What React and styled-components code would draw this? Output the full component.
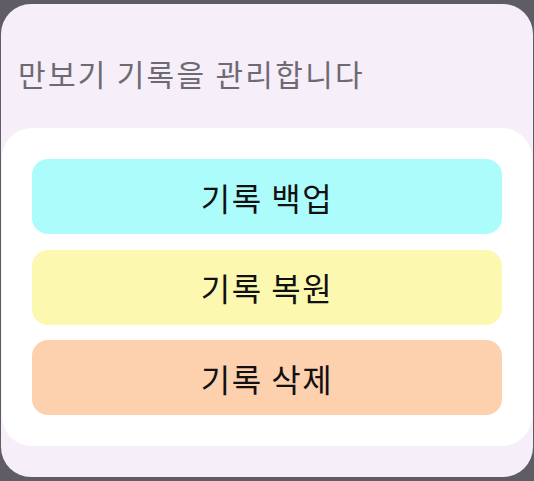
import React from "react";
import styled, { createGlobalStyle } from "styled-components";

const Global = createGlobalStyle`
  html, body { margin: 0; padding: 0; background: #5f5d63; }
  body { width: 534px; height: 481px; overflow: hidden; font-family: "Noto Sans CJK KR", "Noto Sans", sans-serif; }
`;

const Screen = styled.div`
  width: 534px;
  height: 481px;
  box-sizing: border-box;
  padding: 4px 1px 4px 1px;
  display: flex;
`;

const Dialog = styled.div`
  flex: 1;
  background: #f6eef9;
  border-radius: 30px;
  display: flex;
  flex-direction: column;
  overflow: hidden;
`;

const Title = styled.h1`
  margin: 0;
  padding: 54px 0 0 17px;
  height: 70px;
  font-size: 30px;
  font-weight: 400;
  color: #6d6a71;
  line-height: 1;
  letter-spacing: 2.3px;
`;

const Card = styled.div`
  margin: 0 1px;
  background: #ffffff;
  border-radius: 30px;
  padding: 31px 30px 31px 30px;
  display: flex;
  flex-direction: column;
  gap: 15.5px;
`;

const Action = styled.button`
  height: 75px;
  border: none;
  border-radius: 16px;
  background: ${(p) => p.$bg};
  font-family: "Noto Sans CJK KR", "Noto Sans", sans-serif;
  font-size: 32px;
  letter-spacing: 1.5px;
  color: #111;
  display: flex;
  align-items: center;
  justify-content: center;
  padding: 0;
`;

export default function App() {
  return (
    <>
      <Global />
      <Screen>
        <Dialog>
          <Title>만보기 기록을 관리합니다</Title>
          <Card>
            <Action $bg="#adfcfc">기록 백업</Action>
            <Action $bg="#fcf8b0">기록 복원</Action>
            <Action $bg="#fdd0ae">기록 삭제</Action>
          </Card>
        </Dialog>
      </Screen>
    </>
  );
}
